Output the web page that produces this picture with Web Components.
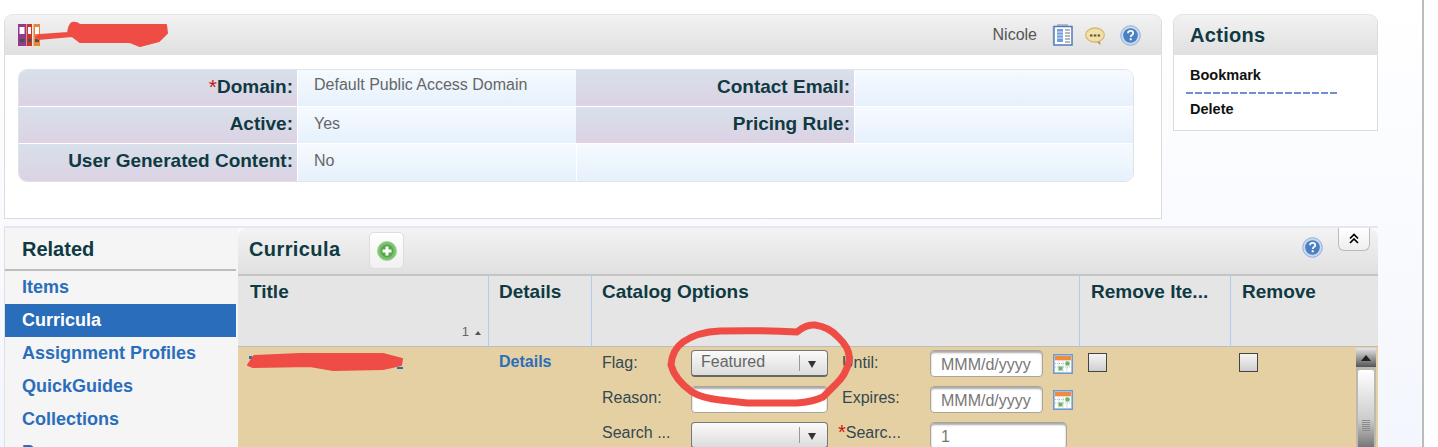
<!DOCTYPE html>
<html>
<head>
<meta charset="utf-8">
<title>Catalog</title>
<style>
  html, body { margin: 0; height: 447px; overflow: hidden; background: #fff; font-family: "Liberation Sans", Arial, sans-serif; }
</style>
</head>
<body>
<app-page></app-page>

<script>
// small helper so every element gets an open shadow root from its own html
function define(name, html) {
  customElements.define(name, class extends HTMLElement {
    constructor() {
      super();
      this.attachShadow({ mode: 'open' });
      this.shadowRoot.innerHTML = html;
    }
  });
}

// icons
define('icon-binders', `
  <style>:host { display: block; width: 23px; height: 23px; } svg { display: block; }</style>
  <svg width="23" height="23" viewBox="0 0 23 23">
    <rect x="0" y="0" width="8" height="22" fill="#93398f"/>
    <rect x="1.500" y="3" width="5" height="7" fill="#fff"/><rect x="1.500" y="15" width="5" height="3" fill="#3c5a4c"/>
    <rect x="8.500" y="0" width="5.500" height="22" fill="#c9352a"/>
    <rect x="10" y="3" width="3" height="7" fill="#fff"/><rect x="10" y="15" width="3" height="3" fill="#3c5a4c"/>
    <rect x="15.500" y="0" width="6.500" height="22" fill="#ee8436"/>
    <rect x="17" y="3" width="4" height="7" fill="#fff"/><rect x="17" y="15" width="4" height="3" fill="#3c5a4c"/>
  </svg>`);

define('icon-notes', `
  <style>:host { display: block; width: 21px; height: 22px; } svg { display: block; }</style>
  <svg width="21" height="22" viewBox="0 0 21 22">
    <rect x="5" y="0" width="11" height="3" fill="#b5bcc6"/>
    <rect x="0" y="2" width="2" height="18" fill="#d5dae2"/>
    <rect x="2" y="2.500" width="18" height="18.500" fill="#fff" stroke="#4f79b8" stroke-width="1.500"/>
    <rect x="5" y="5" width="6" height="13" fill="#6f9ee0"/>
    <path d="M5 8h6M5 11h6M5 14h6" stroke="#d7e5f7"/>
    <path d="M13 6h5M13 9h5M13 12h5M13 15h5M13 18h5" stroke="#9aa0a8" stroke-width="1.300"/>
  </svg>`);

define('icon-chat', `
  <style>:host { display: block; width: 20px; height: 19px; margin-top: 2px; } svg { display: block; }</style>
  <svg width="20" height="19" viewBox="0 0 20 19">
    <path d="M15 14l.5 4-4.500-3.600z" fill="#b8903f"/>
    <ellipse cx="10" cy="8" rx="9.300" ry="7" fill="#f3dfa8" stroke="#d6b877" stroke-width="1.300"/>
    <path d="M5 8.500h2.500M8.800 8.500h2.500M12.600 8.500h2.500" stroke="#5e5236" stroke-width="2.200"/>
  </svg>`);

define('icon-help', `
  <style>:host { display: block; width: 21px; height: 21px; } svg { display: block; }</style>
  <svg width="21" height="21" viewBox="0 0 21 21">
    <circle cx="10.500" cy="10.500" r="9.800" fill="#c8d9f0" stroke="#8fb0de"/>
    <circle cx="10.500" cy="10.500" r="7.300" fill="#4a7fc0"/>
    <path d="M8 8.200c0-3 5.200-3 5.200 0 0 2-2.500 1.800-2.500 3.800" fill="none" stroke="#fff" stroke-width="1.800"/>
    <rect x="9.700" y="13.300" width="2" height="2" fill="#fff"/>
  </svg>`);

define('icon-add', `
  <style>:host { display: block; width: 20px; height: 20px; } svg { display: block; }</style>
  <svg width="20" height="20" viewBox="0 0 20 20">
    <circle cx="10" cy="10" r="9.500" fill="#7cc06d" stroke="#a7d69c"/>
    <circle cx="10" cy="10" r="6.500" fill="#55a84a"/>
    <path d="M10 5.500v9M5.500 10h9" stroke="#fff" stroke-width="3"/>
  </svg>`);

define('icon-collapse', `
  <style>:host { display: block; width: 12px; height: 12px; } svg { display: block; }</style>
  <svg width="12" height="12" viewBox="0 0 12 12">
    <path d="M2 6.500L6 2.500l4 4M2 11L6 7l4 4" fill="none" stroke="#000" stroke-width="1.700"/>
  </svg>`);

define('icon-calendar', `
  <style>:host { display: block; width: 20px; height: 20px; } svg { display: block; }</style>
  <svg width="20" height="20" viewBox="0 0 20 20">
    <rect x="0.750" y="0.750" width="18.500" height="18.500" fill="#dfe9f6" stroke="#6f98cf" stroke-width="1.500"/>
    <rect x="2" y="2" width="16" height="4.500" fill="#f28a3e"/>
    <rect x="2" y="6.500" width="16" height="11.500" fill="#fff"/>
    <path d="M2 9.500h16M2 13h16M6 6.500v11.500M10 6.500v11.500M14 6.500v11.500" stroke="#aebfd6" stroke-dasharray="1 1"/>
    <rect x="5.500" y="12.500" width="4" height="4" fill="#6cb65a"/>
    <rect x="12.500" y="7.500" width="4" height="4" fill="#6cb65a"/>
  </svg>`);

// form bits
define('form-select', `
  <style>
    :host { display: flex; align-items: center; box-sizing: border-box; height: 27px; width: 137px; padding: 0 0 2px 9px;
      border: 1px solid #777; border-bottom: 2px solid #666; border-radius: 4px;
      background: linear-gradient(#fafafa, #dcdcdc); font-size: 16px; color: #666; }
    .text { flex: 1; }
    .bar { width: 1px; height: 16px; margin-top: 2px; background: #999; }
    .arrow { width: 0; height: 0; margin: 4px 11px 0 8px; border: 4.500px solid transparent; border-top: 7px solid #333; border-bottom: 0; }
  </style>
  <span class="text"><slot></slot></span><span class="bar"></span><span class="arrow"></span>`);

define('form-input', `
  <style>
    :host { display: block; box-sizing: border-box; height: 27px; padding: 4px 10px 0; overflow: hidden;
      border: 1px solid #a9a59a; border-radius: 4px; box-shadow: inset 0 2px 2px #aaa;
      background: #fff; font-size: 16px; color: #777; line-height: 20px; white-space: nowrap; }
  </style>
  <slot></slot>`);

define('form-check', `
  <style>
    :host { display: block; box-sizing: border-box; width: 19px; height: 19px;
      border: 1px solid #444; background: linear-gradient(#f5f5f5, #cfcfcf); }
  </style>`);

define('form-label', `
  <style>
    :host { display: block; font-size: 16px; color: #33494f; line-height: 24px; white-space: nowrap; }
  </style>
  <slot></slot>`);

// panel shell with a grey header
define('app-panel', `
  <style>
    :host { display: block; box-sizing: border-box; background: #fff; border: 1px solid #dcdcdc; border-top: 0; border-radius: 9px 9px 0 0; }
    header { display: flex; align-items: center; box-sizing: border-box; height: 41px; padding: 0 16px 0 12px;
      background: linear-gradient(#f2f2f2, #e0e0e0); border-radius: 9px 9px 0 0; border-top: 1px solid #e4e4e4; }
  </style>
  <header><slot name="head"></slot></header>
  <slot></slot>`);

define('detail-row', `
  <style>
    :host { display: grid; grid-template-columns: 278px 279px 278px 1fr; height: 37px; border-bottom: 1px solid #fff; box-sizing: border-box; }
    :host(:last-child) { border-bottom: 0; }
  </style>
  <slot></slot>`);

define('detail-label', `
  <style>
    :host { display: block; padding: 0 4px 0 0; text-align: right; background: linear-gradient(#d8e0ea, #dcd2e4);
      font-size: 19px; font-weight: bold; color: #0f3a42; line-height: 34px; white-space: nowrap; }
  </style>
  <slot></slot>`);

define('detail-value', `
  <style>
    :host { display: block; padding: 0 0 0 16px; background: linear-gradient(#f6faff, #e6f1fc);
      border-left: 1px solid #fff; font-size: 16px; color: #666; line-height: 33px; white-space: nowrap; }
  </style>
  <slot></slot>`);

define('detail-table', `
  <style>
    :host { display: block; margin: 14px 0 0 13px; width: 1116px; box-sizing: border-box; overflow: hidden;
      border: 1px solid #dfe3ea; border-radius: 9px; }
  </style>
  <slot></slot>`);

// top row
define('record-panel', `
  <style>
    :host { display: block; width: 1158px; height: 205px; }
    app-panel { height: 100%; }
    .who { display: flex; align-items: center; width: 100%; }
    .name { margin-left: auto; font-size: 16px; color: #555; }
    icon-binders { margin-left: 1px; }
    icon-notes { margin-left: 15px; }
    icon-chat { margin-left: 12px; }
    icon-help { margin: 0 4px 0 15px; }
  </style>
  <app-panel>
    <div class="who" slot="head">
      <icon-binders></icon-binders>
      <span class="name">Nicole</span>
      <icon-notes></icon-notes><icon-chat></icon-chat><icon-help></icon-help>
    </div>
    <slot></slot>
  </app-panel>`);

define('actions-panel', `
  <style>
    :host { display: block; width: 205px; }
    h2 { margin: 0 0 0 4px; font-size: 20px; font-weight: bold; color: #0f3a42; letter-spacing: .3px; }
    ul { list-style: none; margin: 0; padding: 10px 39px 11px 12px; font-size: 14.500px; font-weight: bold; color: #111; }
    li { line-height: 20px; padding-left: 4px; }
    .line { height: 2px; margin: 7px 0 5px; padding: 0;
      background: repeating-linear-gradient(90deg, #6f8fd0 0 7px, transparent 7px 9px); }
  </style>
  <app-panel>
    <h2 slot="head">Actions</h2>
    <ul><li>Bookmark</li><li class="line"></li><li>Delete</li></ul>
  </app-panel>`);

// left nav
define('related-nav', `
  <style>
    :host { display: block; width: 234px; flex: none; background: #f5f5f5; border-left: 1px solid #e0e0e0; box-sizing: border-box; overflow: hidden; }
    h2 { margin: 0 2px 0 0; box-sizing: border-box; height: 43px; padding-left: 17px; font-size: 20px; font-weight: bold; color: #0f3a42;
      line-height: 42px; border-bottom: 2px solid #bdbdbd; }
    ul { list-style: none; margin: 0; padding: 0; }
    li { box-sizing: border-box; height: 33px; margin-right: 2px; padding-left: 17px; font-size: 18px; font-weight: bold; color: #2a6ebb; line-height: 32px; white-space: nowrap; }
    li.on { background: #2a6ebb; color: #fff; }
  </style>
  <h2>Related</h2>
  <ul>
    <li>Items</li>
    <li class="on">Curricula</li>
    <li>Assignment Profiles</li>
    <li>QuickGuides</li>
    <li>Collections</li>
    <li>Programs</li>
  </ul>`);

// catalog options cell
define('catalog-options', `
  <style>
    :host { display: grid; grid-template-columns: 89px 137px 102px 113px 30px; grid-auto-rows: 27px; row-gap: 9px; align-items: center; padding: 3px 0 0 11px; }
    .r1 { padding-bottom: 2px; }
    .r2 { padding-bottom: 4px; }
    .r3 { padding-bottom: 6px; }
    .second { padding-left: 14px; }
    .search { padding-left: 10px; }
    .wide { grid-column: span 2; width: 137px; }
    icon-calendar { margin-left: 10px; }
    .req { color: #d01010; font-size: 20px; line-height: 0; vertical-align: -1px; }
  </style>
  <form-label class="r1">Flag:</form-label>
  <form-select>Featured</form-select>
  <form-label class="second r1">Until:</form-label>
  <form-input>MMM/d/yyyy</form-input>
  <icon-calendar></icon-calendar>

  <form-label class="r2">Reason:</form-label>
  <form-input></form-input>
  <form-label class="second r2">Expires:</form-label>
  <form-input>MMM/d/yyyy</form-input>
  <icon-calendar></icon-calendar>

  <form-label class="r3">Search ...</form-label>
  <form-select></form-select>
  <form-label class="search r3"><span class="req">*</span>Searc...</form-label>
  <form-input class="wide">1</form-input>`);

define('fake-scrollbar', `
  <style>
    :host { display: block; position: absolute; top: 1px; right: 2px; bottom: 0; width: 20px; background: #bdb9ae; }
    .up { display: flex; justify-content: center; align-items: center; height: 19px; background: linear-gradient(#e6e6e6, #555); }
    .up i { width: 0; height: 0; border: 5px solid transparent; border-bottom: 6px solid #222; border-top: 0; }
    .thumb { margin: 3px 2px 0; height: 110px; border-radius: 2px; background: linear-gradient(#fff, #ccc 45%, #777 70%); }
    .grip { width: 8px; height: 11px; margin: 0 auto; position: relative; top: 50px;
      background: repeating-linear-gradient(#8a8a8a 0 1px, transparent 1px 2px); }
  </style>
  <div class="up"><i></i></div>
  <div class="thumb"><div class="grip"></div></div>`);

// main grid of the bottom right
define('curricula-panel', `
  <style>
    :host { display: block; flex: 1; min-width: 0; position: relative; border-radius: 9px 9px 0 0; overflow: hidden; }
    header { display: flex; align-items: center; box-sizing: border-box; height: 48px; padding: 0 0 4px 11px;
      background: linear-gradient(#f3f3f3, #e0e0e0); border-bottom: 2px solid #c4c4c4; }
    h2 { margin: 0; font-size: 20px; font-weight: bold; color: #0f3a42; letter-spacing: .4px; width: 120px; }
    .add { display: flex; align-items: center; justify-content: center; width: 35px; height: 37px; box-sizing: border-box;
      border: 1px solid #ddd; border-radius: 5px; background: linear-gradient(#fff, #f0f0f0); margin-top: 3px; }
    .help { align-self: flex-start; margin: 9px 55px 0 auto; }
    .collapse { display: flex; justify-content: center; padding-top: 4px; position: absolute; top: 0; right: 8px; box-sizing: border-box; width: 32px; height: 23px;
      border: 1px solid #bbb; border-top: 0; border-radius: 0 0 6px 6px; background: linear-gradient(#fff, #eee); }
    .cols { display: grid; grid-template-columns: 250px 103px 488px 151px 1fr; }
    .th { box-sizing: border-box; height: 71px; padding: 2px 0 0 11px; background: #e5e5e5; border-left: 1px solid #afcdf0; border-bottom: 1px solid #bcbcbc;
      font-size: 19px; font-weight: bold; color: #0f3a42; line-height: 27px; position: relative; white-space: nowrap; }
    .th:first-child { border-left: 0; padding-left: 12px; }
    .th.tight { padding-left: 10px; }
    .sort { position: absolute; right: 7px; bottom: 7px; font-size: 13px; font-weight: normal; line-height: 14px; color: #666; }
    .sort i { display: inline-block; width: 0; height: 0; margin-left: 6px; vertical-align: 1px; border: 3px solid transparent; border-bottom: 4px solid #555; border-top: 0; }
    .row { position: relative; grid-column: 1 / -1; display: grid; background: #e5d0a3; height: 110px; grid-template-columns: 250px 103px 488px 151px 1fr; }
    .link { padding: 3px 0 0 11px; font-size: 16px; font-weight: bold; color: #2a6ebb; line-height: 23px; }
    .check { padding: 6px 0 0 9px; }
  </style>
  <header>
    <h2>Curricula</h2>
    <span class="add"><icon-add></icon-add></span>
    <icon-help class="help"></icon-help>
    <span class="collapse"><icon-collapse></icon-collapse></span>
  </header>
  <div class="cols">
    <div class="th">Title<span class="sort">1<i></i></span></div>
    <div class="th tight">Details</div>
    <div class="th tight">Catalog Options</div>
    <div class="th">Remove Ite...</div>
    <div class="th">Remove</div>
    <div class="row">
      <div></div>
      <div class="link">Details</div>
      <catalog-options></catalog-options>
      <div class="check"><form-check></form-check></div>
      <div class="check"><form-check></form-check></div>
      <fake-scrollbar></fake-scrollbar>
    </div>
  </div>`);

// the red marker scribbles someone drew over the screenshot
define('red-scribbles', `
  <style>
    :host { display: block; position: absolute; left: 0; top: 0; width: 1438px; height: 447px; pointer-events: none; }
    svg { display: block; }
  </style>
  <svg width="1438" height="447" viewBox="0 0 1438 447">
    <path d="M36 37 L40 35 L68 33 Q69 25 72 23 Q76 22 80 25 L166 25 L167 33 L159 41 L140 46 L130 42 L80 42 L72 36 L38 39z" fill="#ee4c44" stroke="#ee4c44" stroke-width="2" stroke-linejoin="round"/>
    <path d="M397 367h6v2h-6zM249 356h3v3h-3z" fill="#2a6ebb"/>
    <path d="M248 365 L254 356 L300 354 L383 354 L402 359 L401 365 L383 369 L333 370 L310 366 L253 367z" fill="#ee4c44" stroke="#ee4c44" stroke-width="2" stroke-linejoin="round"/>
    <path d="M797 332 Q806 324 815 325 Q829 327 838 337 Q851 349 849 361 Q846 375 836 384 L823 397 Q812 402 797 403 L747 403 L720 400 Q702 398 692 392 Q675 380 671 365 Q672 350 683 342 Q697 332 720 331 Q760 330 797 332z"
      fill="none" stroke="#ee4c44" stroke-width="7" stroke-linejoin="round"/>
  </svg>`);

define('app-page', `
  <style>
    :host { display: block; position: relative; box-sizing: border-box; width: 1424px; height: 447px; overflow: hidden; padding: 14px 0 0 4px;
      background: linear-gradient(#fff, #f3f6fd); border-right: 2px solid #bcbcbc; }
    .top { display: flex; align-items: flex-start; gap: 11px; width: 1374px; }
    .bottom { display: flex; width: 1374px; height: 221px; margin-top: 7px; border-top: 2px solid #e6e8ee; }
    .req { color: #d01010; font-weight: normal; font-size: 21px; line-height: 0; vertical-align: -1px; }
  </style>
  <div class="top">
    <record-panel>
      <detail-table>
        <detail-row>
          <detail-label><span class="req">*</span>Domain:</detail-label><detail-value style="line-height: 29px">Default Public Access Domain</detail-value>
          <detail-label>Contact Email:</detail-label><detail-value></detail-value>
        </detail-row>
        <detail-row>
          <detail-label>Active:</detail-label><detail-value>Yes</detail-value>
          <detail-label>Pricing Rule:</detail-label><detail-value></detail-value>
        </detail-row>
        <detail-row>
          <detail-label>User Generated Content:</detail-label><detail-value>No</detail-value>
          <detail-value style="grid-column: span 2"></detail-value>
        </detail-row>
      </detail-table>
    </record-panel>
    <actions-panel></actions-panel>
  </div>
  <div class="bottom">
    <related-nav></related-nav>
    <curricula-panel></curricula-panel>
  </div>
  <red-scribbles></red-scribbles>`);
</script>
</body>
</html>
